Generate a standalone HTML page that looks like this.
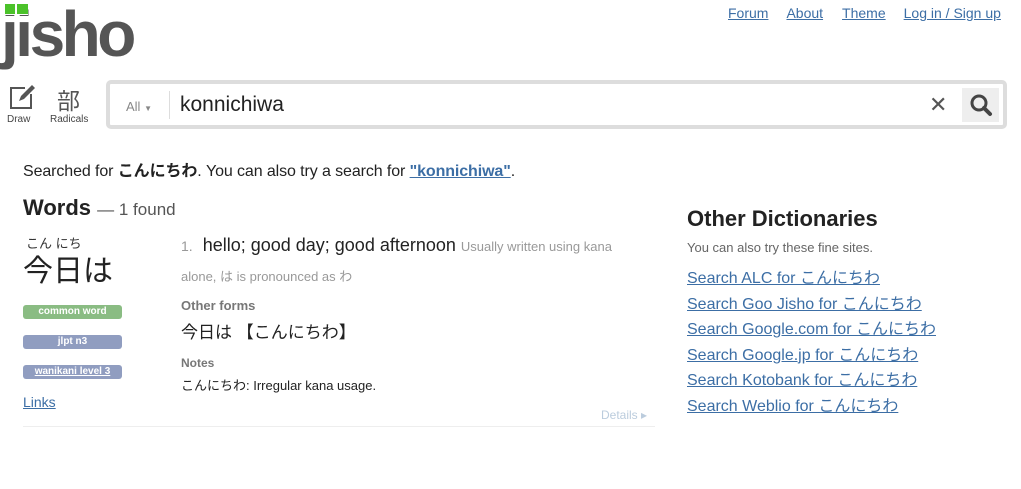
<!DOCTYPE html>
<html><head><meta charset="utf-8"><style>
body{margin:0;width:1021px;height:489px;background:#fff;font-family:"Liberation Sans","Noto Sans CJK JP",sans-serif;color:#222;position:relative;overflow:hidden}
.a{position:absolute;white-space:nowrap}
a{color:#3c6ea5;text-decoration:underline}
.tag{position:absolute;left:23px;width:99px;height:14px;border-radius:3px;color:#fff;font-size:10px;font-weight:bold;text-align:center;line-height:13px}
.od a{display:block;font-size:16px;height:25.6px;line-height:25.6px}
</style></head><body>
<div class="a" style="left:1px;top:-3px;font-size:64px;font-weight:bold;color:#555;letter-spacing:-3.5px">jisho</div>
<div class="a" style="left:4px;top:3px;width:24px;height:12px;background:#fff"></div>
<div class="a" style="left:5px;top:4px;width:10px;height:10px;background:#4bc22a"></div>
<div class="a" style="left:17px;top:4px;width:11px;height:10px;background:#4bc22a"></div>
<div class="a" style="left:728px;top:5px;font-size:14px"><a>Forum</a><a style="margin-left:18px">About</a><a style="margin-left:19px">Theme</a><a style="margin-left:18px">Log in / Sign up</a></div>
<svg class="a" style="left:8px;top:84px" width="28" height="28" viewBox="0 0 28 28"><path d="M17 4H3v20h20V10" fill="none" stroke="#555" stroke-width="2"/><path d="M11 17l2-5 11-11 3 3-11 11z" fill="#555"/></svg>
<div class="a" style="left:7px;top:114px;font-size:10px;color:#444">Draw</div>
<div class="a" style="left:57px;top:82px;font-size:23px;color:#555">部</div>
<div class="a" style="left:50px;top:114px;font-size:10px;color:#444">Radicals</div>
<div class="a" style="left:106px;top:80px;width:893px;height:41px;border:4px solid #ddd;border-radius:5px;background:#fff"></div>
<div class="a" style="left:126px;top:99px;font-size:13px;color:#888">All <span style="font-size:8px">▼</span></div>
<div class="a" style="left:169px;top:91px;width:1px;height:28px;background:#ddd"></div>
<div class="a" style="left:180px;top:93px;font-size:21px;color:#222">konnichiwa</div>
<div class="a" style="left:929px;top:92px;font-size:22px;color:#555">✕</div>
<div class="a" style="left:962px;top:88px;width:37px;height:34px;background:#eee"></div>
<svg class="a" style="left:969px;top:93px" width="24" height="24" viewBox="0 0 24 24"><circle cx="10" cy="10" r="7" fill="none" stroke="#444" stroke-width="3"/><path d="M15 15l6 6" stroke="#444" stroke-width="4" stroke-linecap="round"/></svg>
<div class="a" style="left:23px;top:157px;font-size:16px;letter-spacing:-0.1px">Searched for <b>こんにちわ</b>. You can also try a search for <a style="font-weight:bold">"konnichiwa"</a>.</div>
<div class="a" style="left:23px;top:195px;font-size:22px;font-weight:bold">Words <span style="font-weight:normal;font-size:17px;color:#555">— 1 found</span></div>
<div class="a" style="left:26px;top:233px;font-size:13px;color:#333">こん にち</div>
<div class="a" style="left:23px;top:246px;font-size:30px">今日は</div>
<div class="tag" style="top:305px;background:#8abc83">common word</div>
<div class="tag" style="top:335px;background:#909dc0">jlpt n3</div>
<div class="tag" style="top:365px;background:#909dc0;text-decoration:underline">wanikani level 3</div>
<div class="a" style="left:23px;top:394px;font-size:14px"><a>Links</a></div>
<div class="a" style="left:181px;top:235px;font-size:18px"><span style="font-size:14px;color:#999">1.</span>&nbsp; hello; good day; good afternoon <span style="font-size:13px;color:#999">Usually written using kana</span></div>
<div class="a" style="left:181px;top:266px;font-size:13px;color:#999">alone, は is pronounced as わ</div>
<div class="a" style="left:181px;top:298px;font-size:13px;font-weight:bold;color:#777">Other forms</div>
<div class="a" style="left:181px;top:318px;font-size:17px">今日は 【こんにちわ】</div>
<div class="a" style="left:181px;top:356px;font-size:12px;font-weight:bold;color:#777">Notes</div>
<div class="a" style="left:181px;top:375px;font-size:13px">こんにちわ: Irregular kana usage.</div>
<div class="a" style="left:601px;top:408px;font-size:12px;color:#bcd">Details ▸</div>
<div class="a" style="left:23px;top:426px;width:632px;height:1px;background:#eee"></div>
<div class="a" style="left:687px;top:206px;font-size:22px;font-weight:bold">Other Dictionaries</div>
<div class="a" style="left:687px;top:240px;font-size:13px;color:#666">You can also try these fine sites.</div>
<div class="a od" style="left:687px;top:266px"><a>Search ALC for こんにちわ</a><a>Search Goo Jisho for こんにちわ</a><a>Search Google.com for こんにちわ</a><a>Search Google.jp for こんにちわ</a><a>Search Kotobank for こんにちわ</a><a>Search Weblio for こんにちわ</a></div>
</body></html>
